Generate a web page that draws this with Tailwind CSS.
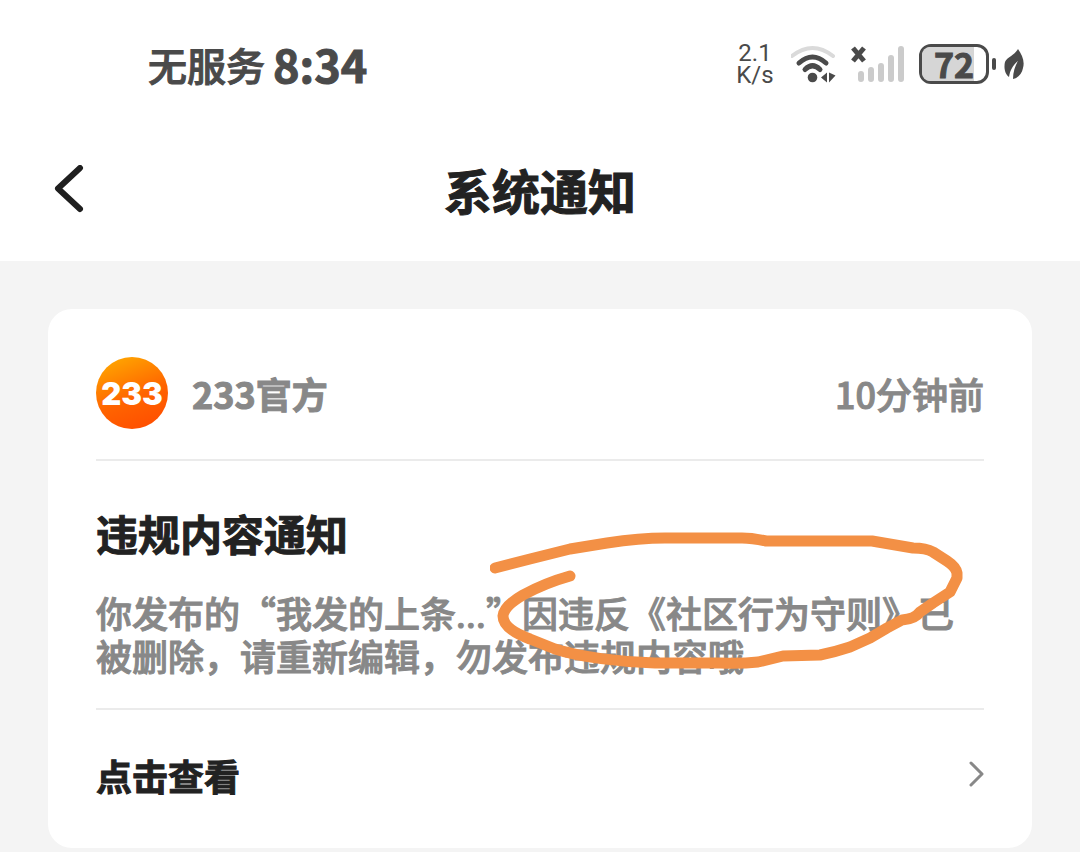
<!DOCTYPE html>
<html lang="zh-CN">
<head>
<meta charset="utf-8">
<meta name="viewport" content="width=device-width, initial-scale=1">
<title>系统通知</title>
<script src="https://cdn.jsdelivr.net/npm/@tailwindcss/browser@4"></script>
</head>
<body class="flex min-h-screen flex-col bg-[#f4f4f4] font-['Noto_Sans_CJK_SC',sans-serif] text-[#222222]">
  <div class="flex h-32 items-center justify-between bg-white pr-14 pl-37 text-[#4a4a4a]">
    <div class="flex items-center gap-2 font-bold">
      <span class="text-[39px] leading-12 font-medium [-webkit-text-stroke:1px]">无服务</span>
      <time class="text-[45px] leading-12 [-webkit-text-stroke:1px]">8:34</time>
    </div>
    <div class="flex items-center">
      <div class="mr-4 w-10 text-center font-[Roboto,sans-serif] text-2xl leading-[22px]">
        <div>2.1</div>
        <div>K/s</div>
      </div>
      <svg class="mr-3 h-10 w-12" viewBox="0 0 48 40" fill="none" stroke-linecap="round" aria-hidden="true">
        <path d="M1 12Q21.500 -4 42 12" stroke="#dadada" stroke-width="4"/>
        <path d="M8 19Q21.500 7 35 19" stroke="#4a4a4a" stroke-width="5"/>
        <path d="M14 25.500Q21.500 18 29 25.500" stroke="#4a4a4a" stroke-width="5"/>
        <circle cx="21.500" cy="33.500" r="4.800" fill="#4a4a4a"/>
        <path d="M30 33.500L36 28.500V38.500ZM38 28.500V38.500L44.500 31.500Z" fill="#4a4a4a"/>
      </svg>
      <svg class="mr-3 h-10 w-14" viewBox="0 0 56 40" fill="none" aria-hidden="true">
        <path d="M2 4L13 17M13 4L2 17" stroke="#4a4a4a" stroke-width="5"/>
        <path d="M10 30V35M20 26V35M30 22V35M40 14V35M50 5V35" stroke="#cbcbcb" stroke-width="6" stroke-linecap="round"/>
      </svg>
      <div class="relative flex h-10 w-[70px] items-center justify-center rounded-xl border-3 border-[#4a4a4a]">
        <div class="absolute inset-y-0 left-0 rounded-l-lg bg-[#d6d6d6]" style="width:82%"></div>
        <span class="relative text-[34px] leading-9 font-bold [-webkit-text-stroke:1px]">72</span>
      </div>
      <div class="ml-[3px] h-3 w-1 rounded-full bg-[#4a4a4a]"></div>
      <svg class="ml-2 h-8 w-5" viewBox="0 0 20 32" fill="none" aria-hidden="true">
        <path d="M14 1C18 7 21 13 19 20C18 26 14 30 9 31C9 24 11 18 14 13C9 17 6 22 5 29C0 25 0 18 1 14C3 9 10 8 14 1Z" fill="#4a4a4a"/>
      </svg>
    </div>
  </div>

  <header class="grid h-[133px] grid-cols-[48px_1fr_48px] items-center bg-white px-12 pb-3">
    <button type="button" aria-label="返回" class="flex h-12 items-center">
      <svg class="h-12 w-12" viewBox="0 0 48 48" fill="none" stroke="#1f1f1f" stroke-width="6" stroke-linecap="round" stroke-linejoin="round" aria-hidden="true">
        <path d="M32 3L10 23.500L32 44"/>
      </svg>
    </button>
    <h1 class="text-center text-5xl leading-14 font-bold [-webkit-text-stroke:1px]">系统通知</h1>
  </header>

  <main class="p-12 pb-1">
    <article class="rounded-3xl bg-white px-12">
      <div class="flex items-center border-b-2 border-[#ebebeb] pt-12 pb-[30px]">
        <svg class="mr-6 h-18 w-18" viewBox="0 0 72 72" role="img" aria-label="233">
          <defs>
            <linearGradient id="brand" x1="0.200" y1="0" x2="0.600" y2="1">
              <stop offset="0" stop-color="#ffa800"/>
              <stop offset="0.600" stop-color="#ff6400"/>
              <stop offset="1" stop-color="#ff5000"/>
            </linearGradient>
          </defs>
          <circle cx="36" cy="36" r="36" fill="url(#brand)"/>
          <text x="36" y="48" text-anchor="middle" fill="#ffffff" class="font-[Inter,sans-serif] text-[31px] font-black">233</text>
        </svg>
        <span class="text-4xl leading-12 font-bold text-[#888888] [-webkit-text-stroke:1px]">233官方</span>
        <time class="ml-auto text-4xl leading-12 font-medium text-[#888888] [-webkit-text-stroke:1px]">10分钟前</time>
      </div>

      <div class="relative border-b-2 border-[#ebebeb] pt-11 pb-8">
        <h2 class="text-[42px] leading-14 font-bold [-webkit-text-stroke:1px]">违规内容通知</h2>
        <p class="mt-[30px] text-4xl leading-[42px] font-medium text-[#888888] [-webkit-text-stroke:1px]">你发布的“我发的上条<span class="font-[Roboto,sans-serif] leading-none">...</span>”因违反《社区行为守则》已被删除，请重新编辑，勿发布违规内容哦</p>
        <svg class="absolute top-[69px] left-[394px] h-[140px] w-[480px]" viewBox="0 0 480 140" fill="none" stroke="#f39045" stroke-width="11" stroke-linecap="round" stroke-linejoin="round" aria-hidden="true">
          <path d="M5 38L40 29L80 19L117 13Q150 8 175 8H252Q262 8 276 11H382L423 18Q436 18 443 22L457 31Q466 37 467 43V48L460 62L443 73L430 82Q425 89 412 90L397 98L380 108L360 117Q345 122 330 125L293 126L268 132Q250 134 230 133H165C130 132 90 127 65 119L40 109Q13 99 13 86Q14 76 33 65Q55 53 80 46"/>
        </svg>
      </div>

      <a href="#" class="flex h-[138px] items-center justify-between pb-2">
        <span class="text-4xl leading-12 font-bold [-webkit-text-stroke:1px]">点击查看</span>
        <svg class="h-8 w-4" viewBox="0 0 16 32" fill="none" stroke="#888888" stroke-width="3" stroke-linecap="round" stroke-linejoin="round" aria-hidden="true">
          <path d="M3 4L14 15L3 26"/>
        </svg>
      </a>
    </article>
  </main>
</body>
</html>
